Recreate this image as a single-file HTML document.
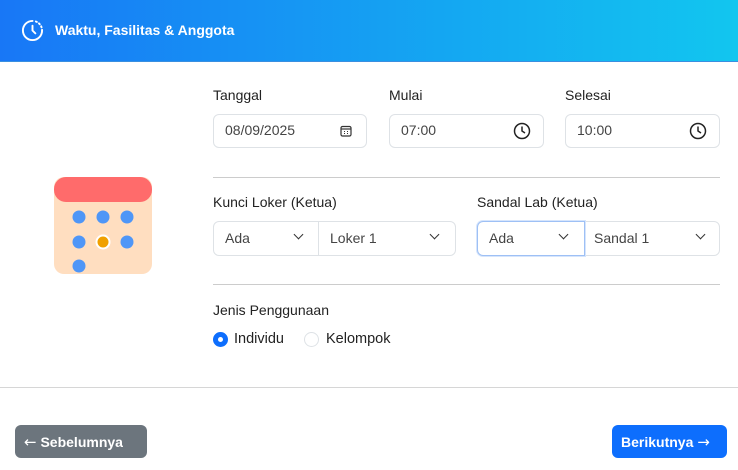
<!DOCTYPE html>
<html><head><style>
*{box-sizing:border-box;margin:0;padding:0}
body{width:738px;height:470px;background:#fff;font-family:"Liberation Sans",sans-serif;color:#212529;position:relative;overflow:hidden}
.hdr{position:absolute;left:0;top:0;width:738px;height:62px;background:linear-gradient(90deg,#1877f6,#12c6ef);border-bottom:1px solid #3a8fe0}
.hdr span{position:absolute;left:55px;top:22px;color:#fff;font-weight:bold;font-size:14px}
.a{position:absolute}
.lbl{font-size:14px;color:#222}
.inp{position:absolute;height:34px;border:1px solid #dee2e6;border-radius:6px;font-size:14px;color:#444;padding:7px 11px}
.hr{position:absolute;height:1px;background:#ccc}
.chev{position:absolute;top:12px;width:7px;height:7px;border-right:1.6px solid #333;border-bottom:1.6px solid #333;transform:rotate(45deg)}
.btn{position:absolute;height:33px;border-radius:6px;color:#fff;font-size:14px;font-weight:bold;padding:8px 9px;white-space:nowrap}
.ar{font-family:"DejaVu Sans",sans-serif;font-weight:normal;font-size:15px}
</style></head><body>
<div class="hdr">
<svg class="a" style="left:21px;top:19px" width="23" height="23" viewBox="0 0 24 24" fill="none" stroke="#fff" stroke-width="2" stroke-linecap="round"><path d="M12 2a10 10 0 1 0 10 10" /><path d="M12 7v5l3 3"/><path d="M15.5 2.6a10 10 0 0 1 6.5 9.4" stroke-dasharray="1.2 2.6"/></svg>
<span>Waktu, Fasilitas &amp; Anggota</span></div>

<div class="a" style="left:54px;top:177px;width:98px;height:97px;background:#ffdec0;border-radius:10px"></div>
<div class="a" style="left:54px;top:177px;width:98px;height:25px;background:#ff6b6b;border-radius:12px"></div>
<svg class="a" style="left:54px;top:177px" width="98" height="97"><g fill="#4f96f7"><circle cx="25" cy="40" r="6.5"/><circle cx="49" cy="40" r="6.5"/><circle cx="73" cy="40" r="6.5"/><circle cx="25" cy="65" r="6.5"/><circle cx="73" cy="65" r="6.5"/><circle cx="25" cy="89" r="6.5"/></g><circle cx="49" cy="65" r="7.5" fill="#fff"/><circle cx="49" cy="65" r="5.5" fill="#f0a000"/></svg>

<div class="a lbl" style="left:213px;top:87px">Tanggal</div>
<div class="a lbl" style="left:389px;top:87px">Mulai</div>
<div class="a lbl" style="left:565px;top:87px">Selesai</div>
<div class="inp" style="left:213px;top:114px;width:154px">08/09/2025
<svg class="a" style="left:126px;top:10px" width="12" height="12" viewBox="0 0 12 12" fill="none" stroke="#333" stroke-width="1.2"><rect x="1" y="1.5" width="10" height="9.5" rx="1.5"/><path d="M1 4h10"/><path d="M4 6.5h1M7 6.5h1M4 8.5h1M7 8.5h1" stroke-width="1"/></svg></div>
<div class="inp" style="left:389px;top:114px;width:155px">07:00
<svg class="a" style="left:123px;top:7px" width="18" height="18" viewBox="0 0 18 18" fill="none" stroke="#222" stroke-width="1.5"><circle cx="9" cy="9" r="7.5"/><path d="M9 4.5V9l3 2"/></svg></div>
<div class="inp" style="left:565px;top:114px;width:155px">10:00
<svg class="a" style="left:123px;top:7px" width="18" height="18" viewBox="0 0 18 18" fill="none" stroke="#222" stroke-width="1.5"><circle cx="9" cy="9" r="7.5"/><path d="M9 4.5V9l3 2"/></svg></div>

<div class="hr" style="left:213px;top:177px;width:507px"></div>

<div class="a lbl" style="left:213px;top:194px">Kunci Loker (Ketua)</div>
<div class="a lbl" style="left:477px;top:194px">Sandal Lab (Ketua)</div>
<div class="inp" style="left:213px;top:221px;width:243px;height:35px"></div>
<div class="a" style="left:318px;top:222px;width:1px;height:33px;background:#dee2e6"></div>
<div class="a" style="left:225px;top:230px;font-size:14px;color:#444">Ada</div><div class="chev" style="left:295px;top:231px"></div>
<div class="a" style="left:330px;top:230px;font-size:14px;color:#444">Loker 1</div><div class="chev" style="left:431px;top:231px"></div>
<div class="inp" style="left:477px;top:221px;width:243px;height:35px"></div>
<div class="a" style="left:477px;top:221px;width:108px;height:35px;border:1px solid #9ec0f5;border-radius:6px 0 0 6px;box-shadow:0 0 0 1px #d6e5fc"></div>
<div class="a" style="left:489px;top:230px;font-size:14px;color:#444">Ada</div><div class="chev" style="left:560px;top:231px"></div>
<div class="a" style="left:594px;top:230px;font-size:14px;color:#444">Sandal 1</div><div class="chev" style="left:697px;top:231px"></div>

<div class="hr" style="left:213px;top:284px;width:507px"></div>

<div class="a lbl" style="left:213px;top:302px">Jenis Penggunaan</div>
<div class="a" style="left:213px;top:332px;width:15px;height:15px;border-radius:50%;background:#0d6efd"></div>
<div class="a" style="left:218px;top:337px;width:5px;height:5px;border-radius:50%;background:#fff"></div>
<div class="a lbl" style="left:234px;top:331px;font-size:14.5px">Individu</div>
<div class="a" style="left:304px;top:332px;width:15px;height:15px;border-radius:50%;border:1px solid #dee2e6"></div>
<div class="a lbl" style="left:326px;top:331px;font-size:14.5px">Kelompok</div>

<div class="hr" style="left:0;top:387px;width:738px;background:#d6d6d6"></div>
<div class="btn" style="left:15px;top:425px;width:132px;background:#6c757d"><span class="ar">←</span> Sebelumnya</div>
<div class="btn" style="left:612px;top:425px;width:115px;background:#0d6efd">Berikutnya <span class="ar">→</span></div>
</body></html>
